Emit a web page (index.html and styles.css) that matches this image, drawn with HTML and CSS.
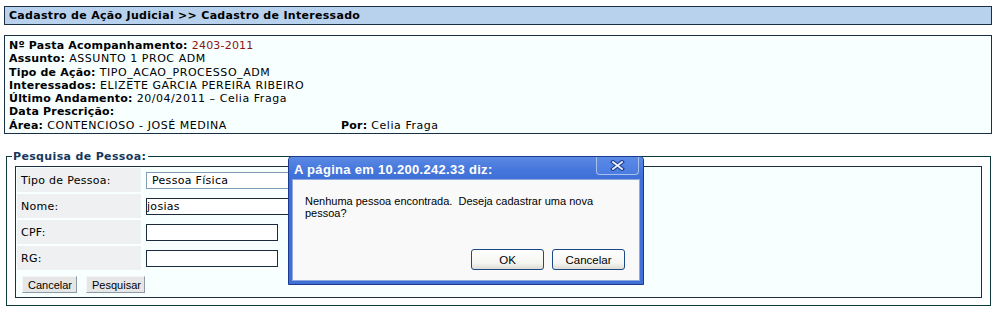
FILE: index.html
```html
<!DOCTYPE html>
<html lang="pt-BR">
<head>
<meta charset="utf-8">
<title>Cadastro de Interessado</title>
<link rel="stylesheet" href="styles.css">
</head>
<body>
<div class="page-title">Cadastro de Ação Judicial &gt;&gt; Cadastro de Interessado</div>

<div class="info">
  <div class="line"><b>Nº Pasta Acompanhamento:</b> <span class="red">2403-2011</span></div>
  <div class="line"><b>Assunto:</b> ASSUNTO 1 PROC ADM</div>
  <div class="line"><b>Tipo de Ação:</b> TIPO_ACAO_PROCESSO_ADM</div>
  <div class="line"><b>Interessados:</b> ELIZETE GARCIA PEREIRA RIBEIRO</div>
  <div class="line"><b>Último Andamento:</b> 20/04/2011 – Celia Fraga</div>
  <div class="line"><b>Data Prescrição:</b></div>
  <div class="line split"><span class="col-a"><b>Área:</b> CONTENCIOSO - JOSÉ MEDINA</span><span><b>Por:</b> Celia Fraga</span></div>
</div>

<fieldset class="search">
  <legend>Pesquisa de Pessoa:</legend>
  <div class="form-box">
    <div class="frow"><div class="lbl">Tipo de Pessoa:</div><div class="val"><div class="select">Pessoa Física</div></div></div>
    <div class="frow"><div class="lbl">Nome:</div><div class="val"><div class="input wide">josias</div></div></div>
    <div class="frow"><div class="lbl">CPF:</div><div class="val"><div class="input"></div></div></div>
    <div class="frow"><div class="lbl">RG:</div><div class="val"><div class="input"></div></div></div>
    <div class="actions"><button class="btn">Cancelar</button><button class="btn">Pesquisar</button></div>
  </div>
</fieldset>

<div class="dialog">
  <div class="dlg-title">
    <span class="dlg-caption">A página em 10.200.242.33 diz:</span>
    <span class="dlg-close"><svg width="15" height="11" viewBox="0 0 15 11"><path d="M3 2 L12 9 M12 2 L3 9" stroke="#1d3c8c" stroke-width="4" stroke-linecap="square"/><path d="M3 2 L12 9 M12 2 L3 9" stroke="#e8eefc" stroke-width="1.8" stroke-linecap="square"/></svg></span>
  </div>
  <div class="dlg-frame">
    <div class="dlg-body">
      <div class="dlg-msg">Nenhuma pessoa encontrada.&nbsp; Deseja cadastrar uma nova pessoa?</div>
      <div class="dlg-buttons"><button class="xpbtn">OK</button><button class="xpbtn">Cancelar</button></div>
    </div>
  </div>
</div>
</body>
</html>
```

FILE: styles.css
```css
html, body {
  background: #ffffff;
}
body {
  margin: 6px 4px 0 4px;
  font-family: "DejaVu Sans", Verdana, sans-serif;
  font-size: 11px;
  color: #000;
}

.page-title {
  height: 17px;
  line-height: 17px;
  border: 1px solid #1a2e45;
  background: #b8d1ed;
  font-weight: bold;
  padding-left: 4px;
  letter-spacing: 0.3px;
}

.info {
  margin-top: 10px;
  border: 1px solid #1a2e45;
  background: #f8ffff;
  padding: 3px 4px 1px 4px;
  letter-spacing: 0.55px;
}
.info b {
  letter-spacing: 0.2px;
}
.line {
  height: 13.3px;
  line-height: 13.3px;
  white-space: nowrap;
}
.red {
  color: #8a1414;
  letter-spacing: 0.2px;
}
.split {
  display: flex;
}
.col-a {
  width: 332px;
}

.search {
  margin: 16px 1px 0 2px;
  padding: 3px 8px 7px 8px;
  border: 1px solid #0c3a3a;
  min-width: 0;
}
.search legend {
  font-weight: bold;
  color: #16395c;
  padding: 0 2px 0 1px;
  margin-left: -3px;
  line-height: 13px;
  letter-spacing: 0.35px;
}

.form-box {
  border: 1px solid #1a2e45;
  background: #f8ffff;
  padding: 1px 1px 4px 1px;
  display: flex;
  flex-direction: column;
  gap: 2px;
}
.frow {
  display: flex;
  height: 24px;
  gap: 2px;
}
.lbl {
  width: 120px;
  padding-left: 4px;
  background: #eef0f1;
  display: flex;
  align-items: center;
  letter-spacing: 0.28px;
}
.val {
  flex: 1;
  padding-left: 3px;
  display: flex;
  align-items: center;
}
.select {
  width: 220px;
  height: 15px;
  line-height: 15px;
  border: 1px solid #7f9db9;
  background: #fff;
  padding-left: 5px;
  letter-spacing: 0.3px;
}
.input {
  width: 130px;
  height: 15px;
  line-height: 15px;
  border: 1px solid #1c2b3b;
  background: #fff;
  letter-spacing: 0.3px;
}
.input.wide {
  width: 220px;
}

.actions {
  display: flex;
  gap: 9px;
  margin-top: 4px;
  padding-left: 5px;
}
.btn {
  height: 17px;
  padding: 0 5px;
  margin: 0;
  font-family: "Liberation Sans", Arial, sans-serif;
  font-size: 11px;
  color: #000;
  background: #e6e6e6;
  border: 1px solid;
  border-color: #f6f6f6 #8d99a6 #8d99a6 #f6f6f6;
}
.btn:first-child {
  width: 55px;
}
.btn:last-child {
  width: 59px;
}

.dialog {
  position: absolute;
  left: 288px;
  top: 156px;
  width: 354px;
  height: 127px;
  border: 1px solid #1b3a8e;
  border-radius: 4px 4px 0 0;
  background: #3f70d6;
  display: flex;
  flex-direction: column;
}
.dlg-title {
  height: 22px;
  display: flex;
  align-items: flex-start;
  background: linear-gradient(#5b8ae4, #4576db 60%, #3f70d6);
  border-radius: 3px 3px 0 0;
}
.dlg-caption {
  padding: 5px 0 0 5px;
  font-family: "Liberation Sans", Arial, sans-serif;
  font-weight: bold;
  font-size: 13px;
  line-height: 15px;
  color: #ffffff;
  letter-spacing: 0.3px;
}
.dlg-close {
  margin-left: auto;
  margin-right: 4px;
  width: 41px;
  height: 17px;
  border: 1px solid #a9c0ee;
  border-top: none;
  border-radius: 0 0 4px 4px;
  background: linear-gradient(#5b8ae6, #4a7ce0);
  display: flex;
  align-items: center;
  justify-content: center;
}
.dlg-frame {
  flex: 1;
  padding: 0 3px 3px 3px;
  display: flex;
}
.dlg-body {
  flex: 1;
  background: #f9f9f9;
  border: 1px solid #8fa9e0;
  display: flex;
  flex-direction: column;
  padding: 15px 14px 10px 12px;
}
.dlg-msg {
  font-family: "Liberation Sans", Arial, sans-serif;
  font-size: 11px;
  line-height: 12px;
  width: 295px;
}
.dlg-buttons {
  margin-top: auto;
  display: flex;
  justify-content: flex-end;
  gap: 8px;
}
.xpbtn {
  width: 73px;
  height: 21px;
  margin: 0;
  padding: 0;
  font-family: "Liberation Sans", Arial, sans-serif;
  font-size: 11.5px;
  color: #000;
  border: 1px solid #1c4a86;
  border-radius: 3px;
  background: linear-gradient(#ffffff, #f4f4f0 70%, #dedbd2);
}
```
